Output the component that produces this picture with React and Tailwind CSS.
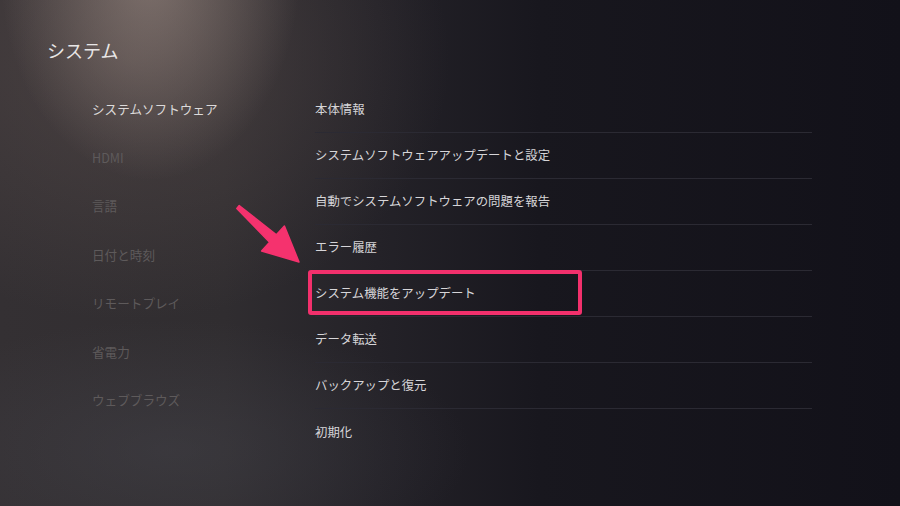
import React from "react";

const leftItems = [
  "システムソフトウェア",
  "HDMI",
  "言語",
  "日付と時刻",
  "リモートプレイ",
  "省電力",
  "ウェブブラウズ",
];

const rightItems = [
  "本体情報",
  "システムソフトウェアアップデートと設定",
  "自動でシステムソフトウェアの問題を報告",
  "エラー履歴",
  "システム機能をアップデート",
  "データ転送",
  "バックアップと復元",
  "初期化",
];

export default function App() {
  return (
    <div
      className="relative w-[900px] h-[506px] overflow-hidden flex flex-col bg-[radial-gradient(ellipse_150px_210px_at_150px_-30px,rgba(185,165,155,0.5),transparent_100%),radial-gradient(ellipse_320px_260px_at_130px_60px,rgba(95,82,80,0.5),transparent_100%),radial-gradient(ellipse_300px_130px_at_170px_450px,rgba(72,72,80,0.4),transparent_100%),linear-gradient(90deg,#343033_0%,#302d30_25%,#242228_42%,#18171e_60%,#121119_100%)]"
      style={{ fontFamily: '"Noto Sans CJK JP", "Noto Sans", sans-serif' }}
    >
      <div className="pl-[47px] pt-[38px] h-[87px] text-[18px] leading-[24px] text-[#e8e6e6]">
        システム
      </div>
      <div className="flex">
        <div className="w-[315px] pl-[92px] -mt-[1.5px]">
          {leftItems.map((t, i) => (
            <div
              key={t}
              className={`h-[48.5px] flex items-center text-[12.6px] ${
                i === 0 ? "text-[#dcdada]" : "text-[#5e5a5b]"
              }`}
            >
              {t}
            </div>
          ))}
        </div>
        <div className="w-[497px]">
          {rightItems.map((t, i) => (
            <div
              key={t}
              className={`relative h-[46px] flex items-center text-[12.4px] text-[#d6d5d8] ${
                i < rightItems.length - 1 ? "border-b border-[#2b2a33]" : ""
              }`}
            >
              {t}
              {i === 4 && (
                <div className="absolute left-[-7px] top-[-1px] w-[274px] h-[45px] border-[4px] border-[#f2306c] rounded-[3px]" />
              )}
            </div>
          ))}
        </div>
      </div>
      <svg
        className="absolute left-0 top-0"
        width="900"
        height="506"
        viewBox="0 0 900 506"
      >
        <polygon
          points="239.2,205.6 276.4,234.8 284.4,226 299,262 261.6,251 269.6,242.2 236.8,208.4"
          fill="#f5326e"
          stroke="#f5326e"
          strokeWidth="1.5"
          strokeLinejoin="round"
        />
      </svg>
    </div>
  );
}
